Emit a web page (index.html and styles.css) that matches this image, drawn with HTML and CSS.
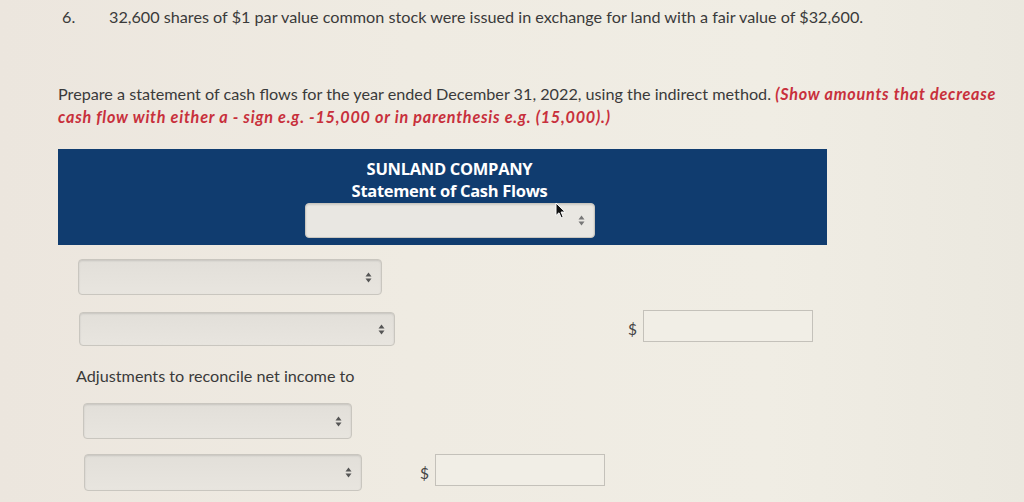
FILE: index.html
```html
<!DOCTYPE html>
<html>
<head>
<meta charset="utf-8">
<link rel="stylesheet" href="styles.css">
</head>
<body>
<div class="page">
  <div class="item">
    <span class="num">6.</span>
    <span class="item-text">32,600 shares of $1 par value common stock were issued in exchange for land with a fair value of $32,600.</span>
  </div>

  <p class="instructions">Prepare a statement of cash flows for the year ended December 31, 2022, using the indirect method. <em class="hint">(Show amounts that decrease cash flow with either a - sign e.g. -15,000 or in parenthesis e.g. (15,000).)</em></p>

  <div class="header">
    <div class="title">SUNLAND COMPANY</div>
    <div class="title">Statement of Cash Flows</div>
    <div class="select select-head">
      <svg class="arrows" width="7" height="11" viewBox="0 0 7 11"><path d="M3.5 0.5 L6.5 4.5 H0.5 Z M3.5 10.5 L6.5 6.5 H0.5 Z" fill="#777"/></svg>
    </div>
    <svg class="cursor" width="12" height="17" viewBox="0 0 12 17"><path d="M1 1 L1 13.5 L4 10.8 L6.2 15.8 L8.2 14.9 L6.1 10 L10.2 10 Z" fill="#111" stroke="#fff" stroke-width="1" stroke-linejoin="round"/></svg>
  </div>

  <div class="rows">
    <div class="row r1">
      <div class="select s1"><svg class="arrows" width="7" height="11" viewBox="0 0 7 11"><path d="M3.5 0.5 L6.5 4.5 H0.5 Z M3.5 10.5 L6.5 6.5 H0.5 Z" fill="#555"/></svg></div>
    </div>
    <div class="row r2">
      <div class="select s2"><svg class="arrows" width="7" height="11" viewBox="0 0 7 11"><path d="M3.5 0.5 L6.5 4.5 H0.5 Z M3.5 10.5 L6.5 6.5 H0.5 Z" fill="#555"/></svg></div>
      <span class="dollar d2">$</span>
      <div class="amount"></div>
    </div>
    <div class="label">Adjustments to reconcile net income to</div>
    <div class="row r3">
      <div class="select s3"><svg class="arrows" width="7" height="11" viewBox="0 0 7 11"><path d="M3.5 0.5 L6.5 4.5 H0.5 Z M3.5 10.5 L6.5 6.5 H0.5 Z" fill="#555"/></svg></div>
    </div>
    <div class="row r4">
      <div class="select s4"><svg class="arrows" width="7" height="11" viewBox="0 0 7 11"><path d="M3.5 0.5 L6.5 4.5 H0.5 Z M3.5 10.5 L6.5 6.5 H0.5 Z" fill="#555"/></svg></div>
      <span class="dollar d4">$</span>
      <div class="amount"></div>
    </div>
  </div>
</div>
</body>
</html>
```

FILE: styles.css
```css
html, body {
  margin: 0;
  padding: 0;
}
body {
  background: linear-gradient(90deg, #ece6de 0%, #efebe2 40%, #f0ede4 75%, #ebe8df 100%);
  font-family: Lato, "Open Sans", sans-serif;
  color: #3a3a3a;
  width: 1024px;
  height: 502px;
  overflow: hidden;
}
.page {
  padding: 6px 0 0 58px;
}
.item {
  display: flex;
  font-size: 16.2px;
  line-height: 22px;
}
.num {
  width: 51px;
  padding-left: 4px;
  box-sizing: border-box;
}
.instructions {
  margin: 54px 0 0 0;
  font-size: 16.2px;
  line-height: 23px;
  width: 950px;
}
.hint {
  color: #c8303c;
  font-weight: bold;
  font-style: italic;
  font-family: Lato, "Open Sans", sans-serif;
  font-size: 16.2px;
  letter-spacing: 0.75px;
}
.header {
  position: relative;
  margin-top: 21px;
  width: 769px;
  height: 96px;
  background: #103c6f;
  display: flex;
  flex-direction: column;
  align-items: center;
  padding: 9px 0 0 14px;
  box-sizing: border-box;
}
.cursor {
  position: absolute;
  left: 497px;
  top: 53px;
}
.title {
  color: #fff;
  font-family: "Open Sans", Arial, sans-serif;
  font-weight: bold;
  font-size: 16.5px;
  line-height: 22px;
  letter-spacing: -0.3px;
}
.select {
  background: linear-gradient(180deg, #e2dfd9, #e8e5df);
  border: 1px solid #c9c6bf;
  border-radius: 4px;
  box-shadow: inset 0 1px 2px rgba(0,0,0,0.12);
  box-sizing: border-box;
  display: flex;
  align-items: center;
  justify-content: flex-end;
  padding-right: 9px;
}
.select-head {
  width: 290px;
  height: 35px;
  margin-top: 1px;
  background: #e9e7e2;
}
.rows {
  display: flex;
  flex-direction: column;
}
.row {
  display: flex;
  align-items: center;
}
.r1 { margin-top: 14px; padding-left: 20px; }
.s1 { width: 304px; height: 36px; }
.r2 { margin-top: 17px; padding-left: 21px; }
.s2 { width: 316px; height: 34px; }
.d2 { margin-left: 233px; }
.label {
  margin-top: 20px;
  padding-left: 18px;
  font-size: 16.2px;
  line-height: 20px;
}
.r3 { margin-top: 17px; padding-left: 25px; }
.s3 { width: 269px; height: 36px; }
.r4 { margin-top: 15px; padding-left: 26px; }
.s4 { width: 278px; height: 37px; }
.d4 { margin-left: 58px; }
.dollar {
  font-size: 15.5px;
  color: #444;
  width: 15px;
}
.amount {
  width: 170px;
  height: 32px;
  border: 1px solid #c4c1ba;
  background: #f1eee6;
  box-sizing: border-box;
}
.r4 .amount { margin-top: -6px; }
.r2 .amount { margin-top: -6px; }
.arrows { display: block; }
```
